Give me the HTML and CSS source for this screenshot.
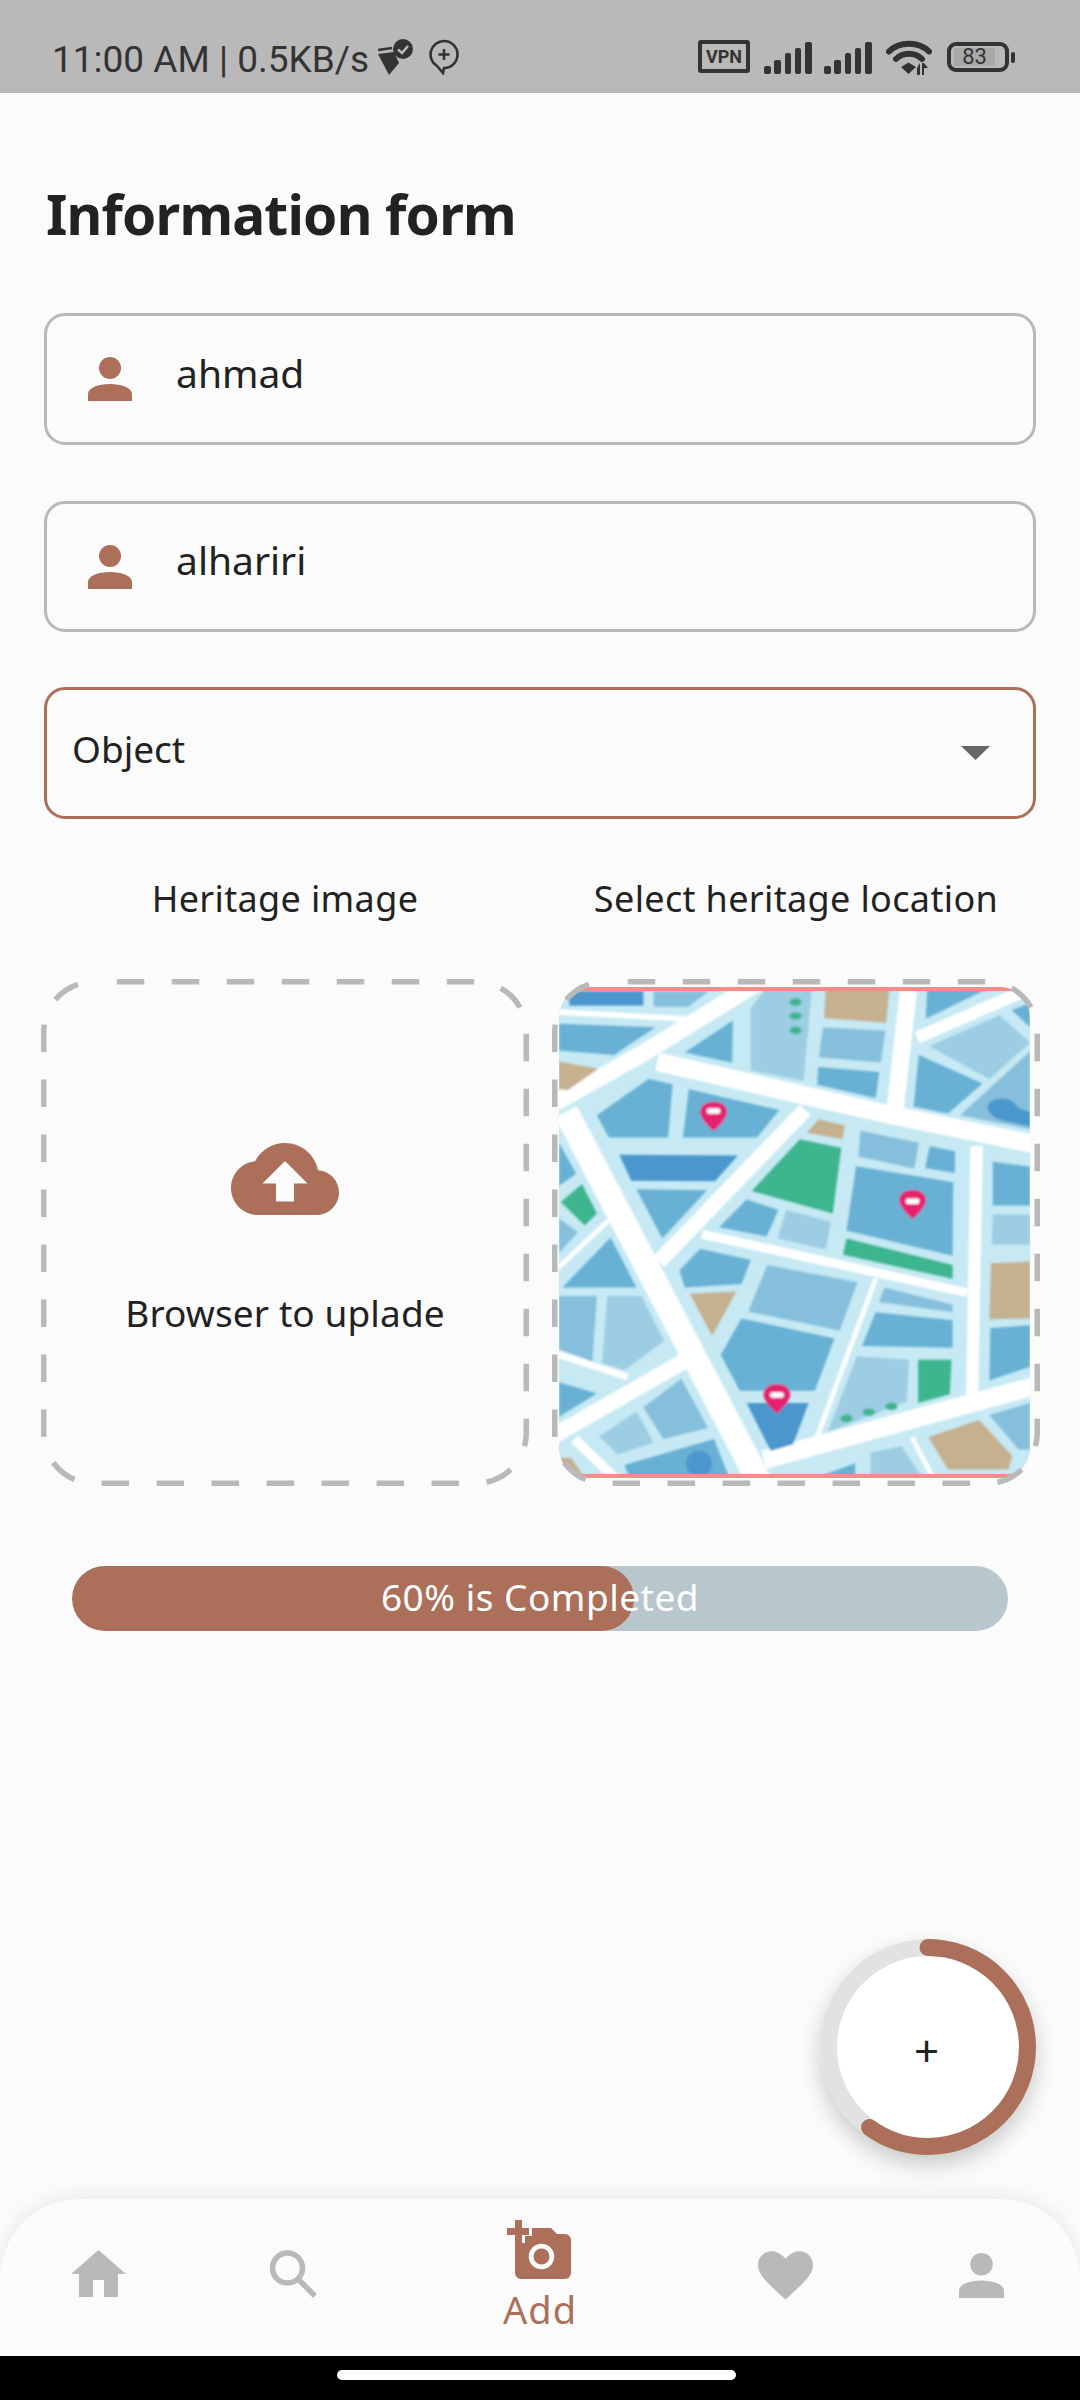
FILE: index.html
```html
<!DOCTYPE html>
<html lang="en">
<head>
<meta charset="utf-8">
<title>Information form</title>
<link rel="stylesheet" href="styles.css">
</head>
<body>
<div class="phone">
  <header class="status">
    <div class="status-left">
      <span class="clock">11:00 AM | 0.5KB/s</span>
      <svg class="st-clean" viewBox="0 0 35 37">
        <path class="ink" d="M0 15 L16 13 L21 24 L11 36 Z"/>
        <path class="ink-line" d="M0 11 L14 9"/>
        <circle class="ink" cx="25" cy="10" r="10"/>
        <path class="check" d="M20 10.5 L24 14 L30 7"/>
      </svg>
      <svg class="st-bubble" viewBox="0 0 30 36">
        <path class="ink-line" d="M15 2 A13.5 13.5 0 1 1 15 29 L14 34 L8 27 A13.5 13.5 0 0 1 15 2 Z"/>
        <path class="ink-line" d="M9.5 15.5 H20.5 M15 10 V21"/>
      </svg>
    </div>
    <div class="status-right">
      <span class="vpn">VPN</span>
      <svg class="st-signal" viewBox="0 0 48 32">
        <rect class="ink" x="0" y="24" width="7" height="8" rx="2"/>
        <rect class="ink" x="10" y="18" width="7" height="14" rx="2"/>
        <rect class="ink" x="21" y="11" width="6" height="21" rx="2"/>
        <rect class="ink" x="31" y="6" width="6" height="26" rx="2"/>
        <rect class="ink" x="41" y="0" width="7" height="32" rx="2"/>
      </svg>
      <svg class="st-signal" viewBox="0 0 48 32">
        <rect class="ink" x="0" y="24" width="7" height="8" rx="2"/>
        <rect class="ink" x="10" y="18" width="7" height="14" rx="2"/>
        <rect class="ink" x="21" y="11" width="6" height="21" rx="2"/>
        <rect class="ink" x="31" y="6" width="6" height="26" rx="2"/>
        <rect class="ink" x="41" y="0" width="7" height="32" rx="2"/>
      </svg>
      <svg class="st-wifi" viewBox="0 0 46 36">
        <path class="wifi-line" d="M3 11.5 C13 1 33 1 43 11.5"/>
        <path class="wifi-line" d="M10 19 C17 12 29 12 36 19"/>
        <path class="ink" d="M15 27 L22.5 22.5 L30 27 L22.5 34 Z"/>
        <path class="ink" d="M31 28 L34 23 V35 H31 Z M36 23 H38 L42 28 H38 V35 H36 Z"/>
      </svg>
      <div class="battery">
        <div class="battery-case"><span class="battery-level">83</span></div>
        <span class="battery-nub"></span>
      </div>
    </div>
  </header>

  <main class="form">
    <h1 class="title">Information form</h1>

    <div class="field field-first">
      <svg class="person" viewBox="0 0 44 44"><circle cx="22" cy="11" r="11"/><path d="M0 44 V37 C0 31 10 27 22 27 C34 27 44 31 44 37 V44 Z"/></svg>
      <span class="field-text">ahmad</span>
    </div>
    <div class="field field-second">
      <svg class="person" viewBox="0 0 44 44"><circle cx="22" cy="11" r="11"/><path d="M0 44 V37 C0 31 10 27 22 27 C34 27 44 31 44 37 V44 Z"/></svg>
      <span class="field-text">alhariri</span>
    </div>
    <div class="select">
      <span class="select-text">Object</span>
      <svg class="caret" viewBox="0 0 29 14"><path d="M0 0 H29 L14.5 14 Z"/></svg>
    </div>

    <div class="tile-labels">
      <span>Heritage image</span>
      <span>Select heritage location</span>
    </div>

    <div class="tiles">
      <div class="tile upload">
        <svg class="dash" viewBox="0 0 488 507"><rect x="2.75" y="2.75" width="482.5" height="501.5" rx="50" ry="50"/></svg>
        <svg class="cloud" viewBox="0 0 24 24"><path fill-rule="evenodd" d="M19.35 10.04C18.67 6.59 15.64 4 12 4 9.11 4 6.6 5.64 5.35 8.04 2.34 8.36 0 10.91 0 14c0 3.31 2.69 6 6 6h13c2.76 0 5-2.24 5-5 0-2.64-2.05-4.78-4.65-4.96zM14 13v4h-4v-4H7l5-5 5 5h-3z"/></svg>
        <span class="upload-text">Browser to uplade</span>
      </div>
      <div class="tile location">
        <div class="map">
          <svg class="map-art" viewBox="55 78 1368 1425" preserveAspectRatio="none">
            <defs>
              <filter id="soft" x="-5%" y="-5%" width="110%" height="110%"><feGaussianBlur stdDeviation="3.4"/></filter>
              <path id="pin" d="M0 44 C-34 14 -42 -6 -38 -18 C-32 -38 -14 -41 0 -41 C14 -41 32 -38 38 -18 C42 -6 34 14 0 44 Z"/>
            </defs>
            <rect class="m-base" x="55" y="78" width="1368" height="1425"/>
            <g filter="url(#soft)">
              <g class="m-road">
                <path stroke-width="50" d="M40 415 L300 270 L640 60"/>
                <path stroke-width="54" d="M340 295 L1000 445 L1440 535"/>
                <path stroke-width="72" d="M75 440 L640 1520"/>
                <path stroke-width="50" d="M1072 70 L1030 445"/>
                <path stroke-width="36" d="M1095 225 L1440 75"/>
                <path stroke-width="44" d="M770 435 L345 875"/>
                <path stroke-width="26" d="M470 795 L1240 965"/>
                <path stroke-width="36" d="M1268 540 L1255 1265"/>
                <path stroke-width="54" d="M650 1450 L1440 1235"/>
                <path stroke-width="46" d="M40 1380 L425 1160"/>
                <path stroke-width="20" d="M40 1140 L255 1210"/>
                <path stroke-width="14" d="M40 905 L205 750"/>
                <path stroke-width="14" d="M975 925 L795 1410"/>
                <path stroke-width="28" d="M100 1390 L235 1520"/>
                <path stroke-width="14" d="M1080 1385 L1145 1510"/>
                <path stroke-width="16" d="M40 150 L420 170"/>
              </g>
              <g class="m-mid">
                <polygon points="55,185 335,195 215,275 55,262"/>
                <polygon points="420,268 560,175 558,298"/>
                <polygon points="808,310 985,325 975,400 805,362"/>
                <polygon points="1125,78 1310,78 1120,170"/>
                <polygon points="1370,145 1423,125 1423,195"/>
                <polygon points="1100,275 1285,358 1185,445 1085,425"/>
                <polygon points="165,450 315,345 385,360 372,515 200,515"/>
                <polygon points="432,375 695,435 630,515 415,515"/>
                <polygon points="1132,540 1205,555 1205,618 1118,603"/>
                <polygon points="918,598 1200,645 1198,858 890,785"/>
                <polygon points="1315,585 1423,600 1423,712 1315,712"/>
                <polygon points="280,665 485,668 355,808"/>
                <polygon points="600,695 692,725 658,802 520,775"/>
                <polygon points="55,530 105,620 55,655"/>
                <polygon points="205,805 280,950 65,950"/>
                <polygon points="405,900 465,838 612,870 585,940 420,950"/>
                <polygon points="585,1040 855,1098 798,1250 580,1250 525,1145"/>
                <polygon points="975,1022 1198,1045 1198,1125 935,1120"/>
                <polygon points="1308,1068 1423,1060 1423,1180 1305,1220"/>
                <polygon points="800,1503 915,1460 915,1503"/>
                <polygon points="55,1225 165,1258 55,1325"/>
                <polygon points="245,1465 505,1390 550,1503 260,1503"/>
              </g>
              <g class="m-soft">
                <polygon points="330,90 490,90 430,135 330,135"/>
                <polygon points="822,195 1003,205 990,297 810,282"/>
                <polygon points="1220,450 1423,265 1423,490"/>
                <polygon points="930,495 1100,530 1087,605 925,570"/>
                <polygon points="55,750 110,790 55,850"/>
                <polygon points="55,975 165,975 152,1165 55,1130"/>
                <polygon points="660,885 922,935 870,1075 605,1020"/>
                <polygon points="1000,950 1198,1000 1198,1022 985,992"/>
                <polygon points="1305,1320 1423,1285 1423,1420 1390,1420"/>
                <polygon points="300,1298 410,1215 488,1358 358,1390"/>
              </g>
              <g class="m-light">
                <polygon points="612,140 660,78 790,78 765,350 612,320"/>
                <polygon points="1130,250 1335,160 1423,240 1305,345"/>
                <polygon points="715,725 845,760 830,840 690,808"/>
                <polygon points="1315,738 1423,738 1423,825 1312,825"/>
                <polygon points="195,975 295,975 360,1105 245,1190 180,1170"/>
                <polygon points="920,1150 1072,1160 1065,1280 835,1370"/>
                <polygon points="960,1430 1050,1410 1110,1503 960,1503"/>
                <polygon points="172,1382 280,1310 330,1400 225,1435"/>
              </g>
              <g class="m-dark">
                <rect x="85" y="90" width="215" height="42"/>
                <polygon points="230,565 575,567 508,642 265,640"/>
                <polygon points="600,1285 780,1285 735,1405 670,1425"/>
                <path d="M1300 425 C1305 395 1370 390 1390 430 L1423 440 V482 L1340 465 C1315 455 1300 445 1300 425 Z"/>
                <circle cx="462" cy="1462" r="38"/>
              </g>
              <g class="m-green">
                <polygon points="755,520 875,545 850,735 615,670"/>
                <polygon points="890,808 1198,885 1198,925 880,855"/>
                <polygon points="60,702 122,650 165,735 130,770"/>
                <polygon points="1098,1160 1195,1160 1190,1260 1098,1285"/>
                <ellipse cx="742" cy="122" rx="18" ry="11"/>
                <ellipse cx="742" cy="162" rx="18" ry="11"/>
                <ellipse cx="742" cy="204" rx="18" ry="11"/>
                <ellipse cx="890" cy="1330" rx="18" ry="11"/>
                <ellipse cx="955" cy="1312" rx="18" ry="11"/>
                <ellipse cx="1020" cy="1295" rx="18" ry="11"/>
              </g>
              <g class="m-tan">
                <polygon points="830,78 1015,78 1005,182 825,168"/>
                <polygon points="55,295 170,315 80,378 55,375"/>
                <polygon points="775,500 810,462 885,480 878,520"/>
                <polygon points="435,968 570,962 500,1090"/>
                <polygon points="1310,880 1423,875 1423,1040 1305,1042"/>
                <polygon points="1128,1385 1275,1335 1372,1440 1360,1478 1185,1478"/>
                <polygon points="55,1445 90,1445 130,1503 55,1503"/>
              </g>
              <g class="m-pin">
                <use href="#pin" x="504" y="452"/>
                <use href="#pin" x="1082" y="708"/>
                <use href="#pin" x="688" y="1272"/>
              </g>
              <g class="m-pin-dot">
                <rect x="484" y="430" width="40" height="16" rx="7"/>
                <rect x="1062" y="692" width="40" height="16" rx="7"/>
                <rect x="668" y="1254" width="40" height="16" rx="7"/>
              </g>
            </g>
            <rect class="m-edge" x="55" y="78" width="1368" height="12"/>
            <rect class="m-edge" x="55" y="1491" width="1368" height="12"/>
          </svg>
        </div>
        <svg class="dash" viewBox="0 0 488 507"><rect x="2.75" y="2.75" width="482.5" height="501.5" rx="50" ry="50"/></svg>
      </div>
    </div>

    <div class="progress">
      <div class="progress-fill"></div>
      <span class="progress-text">60% is Completed</span>
    </div>

    <div class="fab">
      <svg class="fab-ring" viewBox="0 0 216 216">
        <circle class="ring-track" cx="108" cy="108" r="99.5"/>
        <circle class="ring-value" cx="108" cy="108" r="99.5" pathLength="100" stroke-dasharray="60 100" transform="rotate(-90 108 108)"/>
      </svg>
      <span class="fab-plus">+</span>
    </div>
  </main>

  <nav class="tabbar">
    <div class="tab tab-plain">
      <svg class="tab-home" viewBox="0 0 55 47"><path d="M27.5 0 L55 24 H47 V47 H33 V30 H22 V47 H8 V24 H0 Z"/></svg>
    </div>
    <div class="tab tab-plain">
      <svg class="tab-search" viewBox="0 0 49 48"><circle class="search-ring" cx="18.5" cy="18" r="15"/><path class="search-handle" d="M29 29 L46 46"/></svg>
    </div>
    <div class="tab tab-active">
      <svg class="tab-camera" viewBox="0 0 64 59">
        <path d="M8 23 H18 V16 H25 V8 H44 L50 14 H58 A6 6 0 0 1 64 20 V53 A6 6 0 0 1 58 59 H14 A6 6 0 0 1 8 53 Z"/>
        <path d="M8 0 H15 V8 H22 V15 H15 V23 H8 V15 H0 V8 H8 Z"/>
        <circle class="camera-lens" cx="34.5" cy="36.5" r="10.4"/>
      </svg>
      <span class="tab-label">Add</span>
    </div>
    <div class="tab tab-plain">
      <svg class="tab-heart" viewBox="0 0 24 22"><path d="M12 21.5 L10.3 19.9 C4.1 14.3 0 10.6 0 6.4 0 3 2.6.4 6 .4 7.9.4 9.8 1.3 12 3.6 14.2 1.3 16.1.4 18 .4 21.4.4 24 3 24 6.4 24 10.6 19.9 14.3 13.7 19.9 Z"/></svg>
    </div>
    <div class="tab tab-plain">
      <svg class="tab-person" viewBox="0 0 44 44"><circle cx="22" cy="11" r="11"/><path d="M0 44 V37 C0 31 10 27 22 27 C34 27 44 31 44 37 V44 Z"/></svg>
    </div>
  </nav>

  <div class="gesture"><span class="gesture-pill"></span></div>
</div>
</body>
</html>
```

FILE: styles.css
```css
* { box-sizing: border-box; margin: 0; padding: 0; }

html, body {
  width: 1080px;
  height: 2400px;
  overflow: hidden;
  background: #fbfbfb;
}

body {
  font-family: "Noto Sans", "Open Sans", sans-serif;
  color: #222;
}

.phone {
  width: 1080px;
  height: 2400px;
  display: flex;
  flex-direction: column;
}

/* status bar */
.status {
  flex: 0 0 93px;
  background: #b9b9b9;
  display: flex;
  justify-content: space-between;
  color: #333;
}

.status-left {
  display: flex;
  align-items: flex-start;
  padding: 38px 0 0 52px;
}

.clock {
  font-family: Roboto, sans-serif;
  font-size: 37px;
  line-height: 44px;
  white-space: nowrap;
}

.ink { fill: #333; }
.ink-line { fill: none; stroke: #333; stroke-width: 2.6; }
.check { fill: none; stroke: #b9b9b9; stroke-width: 2.6; }
.wifi-line { fill: none; stroke: #333; stroke-width: 6; stroke-linecap: round; }

.st-clean { width: 35px; height: 37px; margin: 1px 0 0 9px; }
.st-bubble { width: 30px; height: 36px; margin: 1px 0 0 16px; }

.status-right {
  display: flex;
  align-items: flex-start;
  padding: 40px 65px 0 0;
}

.vpn {
  width: 52px;
  height: 33px;
  border: 4px solid #333;
  border-radius: 3px;
  font-family: Roboto, sans-serif;
  font-weight: 700;
  font-size: 18px;
  line-height: 25px;
  text-align: center;
}

.st-signal { width: 48px; height: 32px; margin: 2px 0 0 14px; }
.st-signal + .st-signal { margin-left: 12px; }
.st-wifi { width: 46px; height: 36px; margin: 0 0 0 14px; }

.battery { display: flex; align-items: center; margin: 2px 0 0 15px; }

.battery-case {
  width: 62px;
  height: 30px;
  border: 4px solid #333;
  border-radius: 9px;
  padding: 2px 10px 2px 3px;
}

.battery-level {
  display: block;
  height: 18px;
  background: #a8a8a8;
  font-family: Roboto, sans-serif;
  font-size: 22px;
  line-height: 18px;
  text-align: center;
}

.battery-nub {
  width: 4px;
  height: 11px;
  margin-left: 2px;
  background: #333;
  border-radius: 2px;
}

/* form */
.form {
  flex: 1;
  position: relative;
  padding-top: 86px;
}

.title {
  height: 70px;
  margin: 0 0 64px 46px;
  font-size: 55px;
  line-height: 70px;
  font-weight: 700;
  letter-spacing: -.8px;
  color: #222;
}

.field, .select {
  display: flex;
  align-items: center;
  margin: 0 44px;
  border: 3px solid #b9b9b9;
  border-radius: 21px;
}

.field-first { height: 132px; margin-bottom: 56px; }
.field-second { height: 131px; margin-bottom: 55px; }

.person { width: 44px; height: 44px; margin: 0 0 0 41px; fill: #ab6f5a; }

.field-text {
  margin: 0 0 13px 44px;
  font-size: 39px;
  line-height: 50px;
}

.select {
  height: 132px;
  justify-content: space-between;
  border-color: #ab6f5a;
  padding: 0 43px 0 25px;
}

.select-text { font-size: 37px; line-height: 50px; margin-bottom: 8px; }
.caret { width: 29px; height: 14px; fill: #666; }

.tile-labels {
  display: grid;
  grid-template-columns: 488px 488px;
  column-gap: 23px;
  margin: 55px 0 55px 41px;
  font-size: 36px;
  letter-spacing: .35px;
  line-height: 50px;
  text-align: center;
}

.tiles {
  display: grid;
  grid-template-columns: 488px 488px;
  column-gap: 23px;
  margin: 0 0 80px 41px;
}

.tile {
  position: relative;
  height: 507px;
}

.dash {
  position: absolute;
  inset: 0;
  width: 488px;
  height: 507px;
  fill: none;
}

.dash rect {
  stroke: #b9b9b9;
  stroke-width: 5.5;
  stroke-dasharray: 27.5 27.5;
  stroke-dashoffset: 32;
}

.upload {
  display: flex;
  flex-direction: column;
  align-items: center;
  padding-top: 146px;
}

.cloud { width: 108px; height: 108px; fill: #ab6f5a; }

.upload-text {
  margin-top: 55px;
  font-size: 37px;
  letter-spacing: .1px;
  line-height: 50px;
}

.location { padding: 8px 7px; }

.map {
  width: 471px;
  height: 491px;
  border-radius: 30px;
  overflow: hidden;
}

.map-art { display: block; width: 471px; height: 491px; }

.m-base { fill: #c6e9f4; }
.m-road path { fill: none; stroke: #fff; stroke-linecap: butt; }
.m-mid { fill: #68b1d4; }
.m-soft { fill: #86bfdb; }
.m-light { fill: #9ccde3; }
.m-dark { fill: #4c97cd; }
.m-green { fill: #3cb58e; }
.m-tan { fill: #c5b08f; }
.m-pin { fill: #e5246f; }
.m-pin-dot { fill: #fff; }
.m-edge { fill: #f48c8c; }

.progress {
  position: relative;
  display: flex;
  justify-content: center;
  height: 65px;
  margin: 0 72px;
  background: #b7c7cd;
  border-radius: 33px;
  overflow: hidden;
}

.progress-fill {
  position: absolute;
  left: 0;
  top: 0;
  bottom: 0;
  width: 562px;
  background: #ab6f5a;
  border-radius: 33px;
}

.progress-text {
  position: relative;
  color: #fff;
  font-size: 37px;
  letter-spacing: .5px;
  line-height: 62px;
}

/* round action */
.fab {
  position: absolute;
  right: 44px;
  bottom: 44px;
  width: 216px;
  height: 216px;
  display: flex;
  align-items: center;
  justify-content: center;
  background: #fff;
  border-radius: 50%;
  box-shadow: 0 10px 22px rgba(0, 0, 0, .2);
}

.fab-ring { position: absolute; inset: 0; width: 216px; height: 216px; fill: none; }
.ring-track { stroke: #e2e2e2; stroke-width: 17; }
.ring-value { stroke: #ab6f5a; stroke-width: 17; stroke-linecap: round; }

.fab-plus {
  position: relative;
  font-size: 44px;
  line-height: 44px;
  margin: 6px 3px 0 0;
  color: #222;
}

/* bottom tabs */
.tabbar {
  flex: 0 0 157px;
  display: grid;
  grid-template-columns: 196px 194px 300px 190px 200px;
  background: #fbfbfb;
  border-radius: 80px 80px 0 0;
  box-shadow: 0 -4px 20px rgba(0, 0, 0, .07);
  position: relative;
}

.tab { display: flex; flex-direction: column; align-items: center; }
.tab-plain { padding-top: 51px; fill: #b9b9b9; }
.tab-active { padding-top: 21px; fill: #ab6f5a; }

.tab-home { width: 55px; height: 47px; }
.tab-search { width: 49px; height: 48px; }
.search-ring { fill: none; stroke: #b9b9b9; stroke-width: 5.5; }
.search-handle { fill: none; stroke: #b9b9b9; stroke-width: 5.5; }
.tab-heart { width: 55px; height: 51px; }
.tab-person { width: 45px; height: 45px; margin: 3px 0 0 3px; }
.tab-camera { width: 64px; height: 59px; margin-right: 2px; }
.camera-lens { fill: none; stroke: #fbfbfb; stroke-width: 4.7; }

.tab-label {
  font-size: 38px;
  letter-spacing: 1px;
  line-height: 44px;
  color: #ab6f5a;
  margin-top: 8px;
}

.gesture {
  flex: 0 0 44px;
  background: #000;
  display: flex;
  justify-content: center;
  padding-top: 14px;
  position: relative;
}

.gesture-pill {
  width: 399px;
  height: 10px;
  margin-right: 7px;
  background: #fff;
  border-radius: 5px;
}
```
